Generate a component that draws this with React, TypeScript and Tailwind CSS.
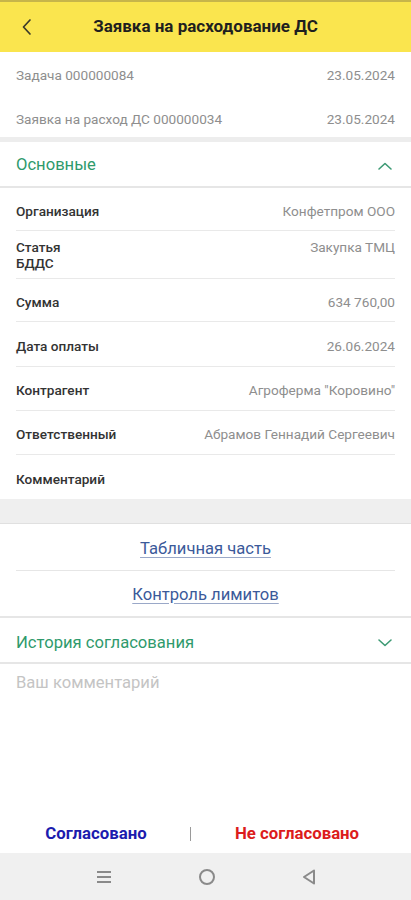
// App.tsx
const font = { fontFamily: 'Roboto, "Noto Sans", Arial, sans-serif' };

type Field = { label: string; value: string; h: string; line?: boolean; tall?: boolean };

const fields: Field[] = [
  { label: 'Организация', value: 'Конфетпром ООО', h: 'h-[43px]', line: true },
  { label: 'Статья\nБДДС', value: 'Закупка ТМЦ', h: 'h-[48px]', line: true, tall: true },
  { label: 'Сумма', value: '634 760,00', h: 'h-[43px]', line: true },
  { label: 'Дата оплаты', value: '26.06.2024', h: 'h-[45px]', line: true },
  { label: 'Контрагент', value: 'Агроферма "Коровино"', h: 'h-[44px]', line: true },
  { label: 'Ответственный', value: 'Абрамов Геннадий Сергеевич', h: 'h-[44px]', line: true },
  { label: 'Комментарий', value: '', h: 'h-[44px]' },
];

function Chevron({ up }: { up?: boolean }) {
  return (
    <svg width="16" height="10" viewBox="0 0 16 10" fill="none">
      <path
        d={up ? 'M2 8 L8 2.5 L14 8' : 'M2 2 L8 7.5 L14 2'}
        stroke="#3d9a74"
        strokeWidth="1.6"
        strokeLinecap="round"
        strokeLinejoin="round"
      />
    </svg>
  );
}

export default function App() {
  return (
    <div className="w-[411px] h-[900px] bg-white flex flex-col overflow-hidden" style={font}>
      <div className="h-[2px] bg-[#c7b54a]" />
      {/* header */}
      <div className="h-[50px] bg-[#fae54e] flex items-center relative">
        <svg className="absolute left-[20px]" width="14" height="20" viewBox="0 0 14 20" fill="none">
          <path d="M10 3 L3.5 10 L10 17" stroke="#3a3a2a" strokeWidth="1.7" strokeLinecap="round" strokeLinejoin="round" />
        </svg>
        <div className="flex-1 text-center text-[17px] font-bold text-[#1f1f1f]">Заявка на расходование ДС</div>
      </div>

      {/* task rows */}
      <div className="h-[46px] flex items-center justify-between px-4 text-[13.6px] text-[#8e8e8e]">
        <span>Задача 000000084</span>
        <span>23.05.2024</span>
      </div>
      <div className="h-[39px] pt-[4px] flex items-center justify-between px-4 text-[13.6px] text-[#8e8e8e]">
        <span>Заявка на расход ДС 000000034</span>
        <span>23.05.2024</span>
      </div>
      <div className="h-[5px] bg-[#ededed]" />

      {/* Основные */}
      <div className="h-[46px] pt-[3px] flex items-center justify-between pl-4 pr-[18px] border-b-2 border-[#e6e6e6]">
        <span className="text-[16.6px] text-[#2f9a6c]">Основные</span>
        <Chevron up />
      </div>
      <div className="px-4">
        {fields.map((f) => (
          <div
            key={f.label}
            className={`flex justify-between ${f.h} ${f.tall ? 'pt-[8px] items-start' : 'pt-[3px] items-center'} ${f.line ? 'border-b border-[#e9e9e9]' : ''}`}
          >
            <span className="text-[13.6px] font-medium text-[#333] whitespace-pre-line leading-[16px]">{f.label}</span>
            <span className="text-[13.6px] text-[#8e8e8e] leading-[16px]">{f.value}</span>
          </div>
        ))}
      </div>
      <div className="h-[25px] bg-[#efefef] border-b border-[#e0e0e0]" />

      {/* links */}
      <div className="px-4">
        <div className="h-[47px] pt-[5px] flex items-center justify-center border-b border-[#e6e6e6]">
          <span className="text-[16.6px] text-[#3b5a9a] underline underline-offset-[3px] decoration-[#9aa8c8]">Табличная часть</span>
        </div>
        <div className="h-[45px] pt-[3px] flex items-center justify-center">
          <span className="text-[16.6px] text-[#3b5a9a] underline underline-offset-[3px] decoration-[#9aa8c8]">Контроль лимитов</span>
        </div>
      </div>
      <div className="h-[2px] bg-[#e6e6e6]" />
      <div className="h-[46px] pt-[6px] flex items-center justify-between pl-4 pr-[18px] border-b-2 border-[#e6e6e6]">
        <span className="text-[16.6px] text-[#2f9a6c]">История согласования</span>
        <Chevron />
      </div>

      {/* comment */}
      <div className="flex-1 px-4 pt-[7px]">
        <span className="text-[16.6px] text-[#c4c4c4]">Ваш комментарий</span>
      </div>

      {/* actions */}
      <div className="h-[42px] flex items-center pt-[3px]">
        <div className="w-[190px] flex justify-center pl-[2px]">
          <span className="text-[16.8px] font-bold text-[#1c1cae]">Согласовано</span>
        </div>
        <div className="w-px h-[14px] bg-[#9a9a9a]" />
        <div className="flex-1 flex justify-center pr-[8px]">
          <span className="text-[16.8px] font-bold text-[#dc1c1c]">Не согласовано</span>
        </div>
      </div>

      {/* nav bar */}
      <div className="h-[47px] bg-[#f0f0f0] flex items-center justify-around px-[52px]">
        <svg width="18" height="16" viewBox="0 0 18 16" fill="none">
          <path d="M2 3 H16 M2 8 H16 M2 13 H16" stroke="#8a8a8a" strokeWidth="2" />
        </svg>
        <svg width="18" height="18" viewBox="0 0 18 18" fill="none">
          <circle cx="9" cy="9" r="7" stroke="#8a8a8a" strokeWidth="2" />
        </svg>
        <svg width="16" height="18" viewBox="0 0 16 18" fill="none">
          <path d="M13 2.5 L3 9 L13 15.5 Z" stroke="#8a8a8a" strokeWidth="2" strokeLinejoin="round" />
        </svg>
      </div>
    </div>
  );
}
